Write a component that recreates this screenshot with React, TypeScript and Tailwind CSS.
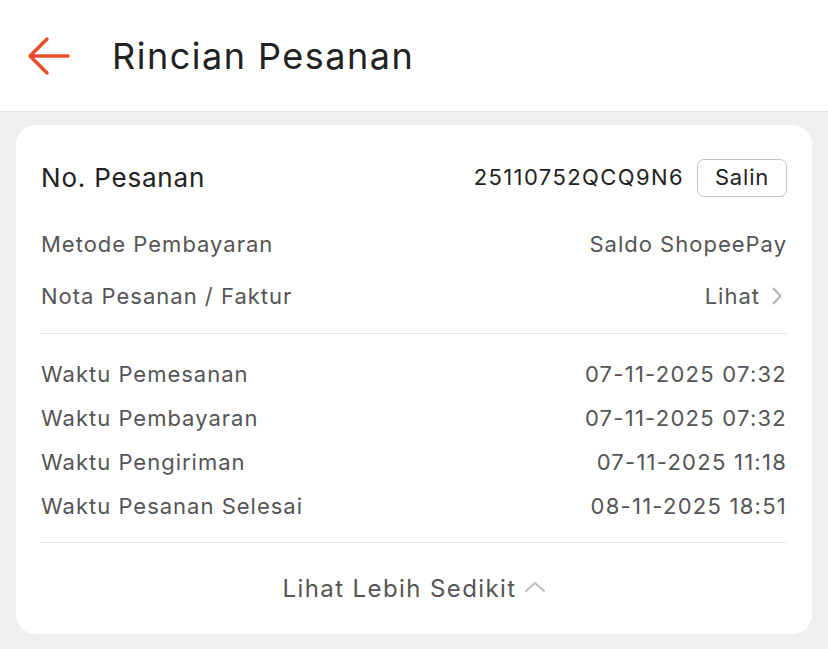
import React from "react";

const rows1 = [
  { label: "Metode Pembayaran", value: "Saldo ShopeePay" },
];

const times = [
  { label: "Waktu Pemesanan", value: "07-11-2025 07:32" },
  { label: "Waktu Pembayaran", value: "07-11-2025 07:32" },
  { label: "Waktu Pengiriman", value: "07-11-2025 11:18" },
  { label: "Waktu Pesanan Selesai", value: "08-11-2025 18:51" },
];

export default function App() {
  return (
    <div
      className="w-[828px] h-[649px] bg-[#efefef] overflow-hidden"
      style={{ fontFamily: "Inter, 'Liberation Sans', sans-serif" }}
    >
      <div className="h-[112px] bg-white border-b border-[#e4e4e4] flex items-center">
        <svg className="ml-[27px] mr-[41px]" width="44" height="40" viewBox="0 0 44 40" fill="none">
          <path d="M41 20H4M20 3L3 20l17 17" stroke="#ee4d2d" strokeWidth="3.5" strokeLinecap="round" strokeLinejoin="round" />
        </svg>
        <div className="text-[36px] text-[#222] tracking-[1.5px]">Rincian Pesanan</div>
      </div>

      <div className="mx-[16px] mt-[13px] bg-white rounded-[20px] px-[25px]">
        <div className="flex items-center justify-between pt-[33px]">
          <div className="text-[26px] text-[#222] tracking-[0.8px]">No. Pesanan</div>
          <div className="flex items-center">
            <span className="text-[22px] text-[#222] tracking-[1.4px] mr-[13px]">25110752QCQ9N6</span>
            <span className="h-[38px] w-[90px] justify-center flex items-center text-[22px] text-[#222] tracking-[0.8px] border-[1.5px] border-[#c4c4c4] rounded-[7px]">
              Salin
            </span>
          </div>
        </div>

        <div className="pt-[21px] pb-[11px]">
          {rows1.map((r) => (
            <div key={r.label} className="flex items-center justify-between h-[52px] text-[22px] text-[#555] tracking-[1px]">
              <span>{r.label}</span>
              <span>{r.value}</span>
            </div>
          ))}
          <div className="flex items-center justify-between h-[52px] text-[22px] text-[#555] tracking-[1px]">
            <span>Nota Pesanan / Faktur</span>
            <span className="flex items-center">
              Lihat
              <svg className="ml-[12px] mr-[5px]" width="10" height="18" viewBox="0 0 10 18" fill="none">
                <path d="M1.5 1.5L8.5 9l-7 7.5" stroke="#b5b5b5" strokeWidth="2" strokeLinecap="round" strokeLinejoin="round" />
              </svg>
            </span>
          </div>
        </div>

        <div className="border-t border-[#e6e6e6] pt-[18px] pb-[14px]">
          {times.map((r) => (
            <div key={r.label} className="flex items-center justify-between h-[44px] text-[22px] text-[#555] tracking-[1px]">
              <span>{r.label}</span>
              <span className="tracking-[1.25px]">{r.value}</span>
            </div>
          ))}
        </div>

        <div className="border-t border-[#e6e6e6] h-[92px] flex items-center justify-center text-[24px] text-[#555] tracking-[1.4px]">
          Lihat Lebih Sedikit
          <svg className="ml-[7px] mb-[4px]" width="22" height="12" viewBox="0 0 22 12" fill="none">
            <path d="M2 10l9-8 9 8" stroke="#bdbdbd" strokeWidth="2" strokeLinecap="round" strokeLinejoin="round" />
          </svg>
        </div>
      </div>
    </div>
  );
}
